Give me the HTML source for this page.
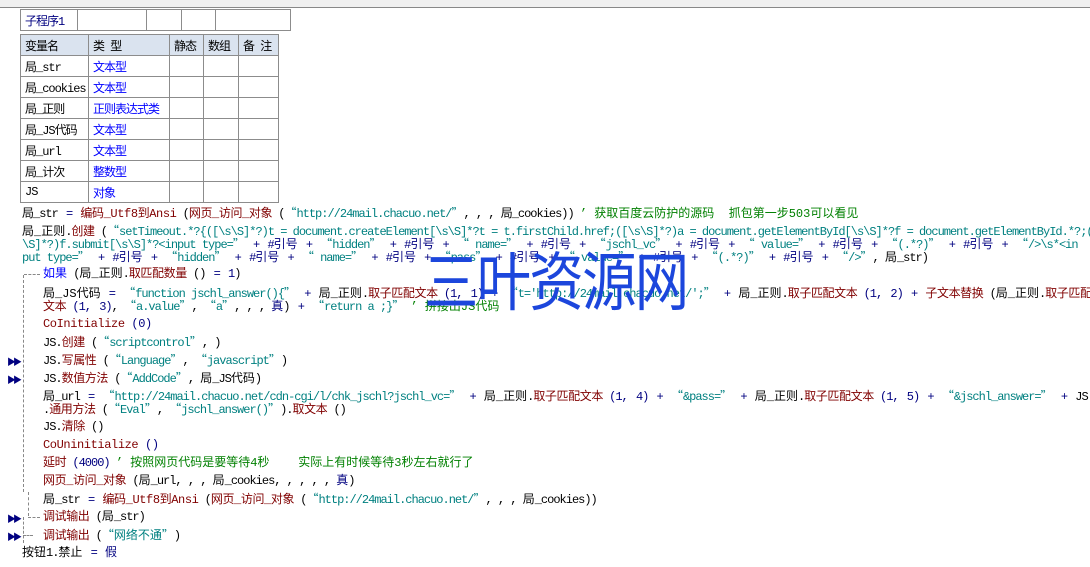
<!DOCTYPE html><html><head><meta charset="utf-8"><style>
body{margin:0;width:1090px;height:567px;background:#fff;position:relative;overflow:hidden;font-family:"Liberation Mono","Noto Sans CJK SC","WenQuanYi Zen Hei",monospace;font-size:12px;letter-spacing:-1px}
.l{position:absolute;white-space:pre;height:14px;line-height:14px;color:#000;word-spacing:0}
.r{color:#800000;letter-spacing:-0.4px}.t{color:#008080;word-spacing:0}.n{color:#000080;word-spacing:2px}.g{color:#008000;letter-spacing:0;word-spacing:0}.b{color:#0000ff}
.c{letter-spacing:0}
i{font-style:normal;font-family:"Noto Sans CJK SC",sans-serif;display:inline-block;width:12px;letter-spacing:0}
table{position:absolute;border-collapse:collapse;font-size:12px}
td{border:1px solid #8c8c8c;height:20px;padding:0 0 0 4px;white-space:nowrap}
.m{position:absolute;left:7px;color:#000080;font-size:9px;letter-spacing:-3px}
</style></head><body>
<div style="position:absolute;left:0;top:0;width:1090px;height:7px;background:#f0f0f0;border-bottom:1px solid #888"></div>
<table style="left:20px;top:9px"><tr><td style="width:52px;color:#000080">子程序1</td><td style="width:64px"></td><td style="width:30px"></td><td style="width:29px"></td><td style="width:70px"></td></tr></table>
<table style="left:20px;top:34px">
<tr style="background:#dae3ef"><td style="width:63px">变量名</td><td style="width:76px">类 型</td><td style="width:29px">静态</td><td style="width:30px">数组</td><td style="width:35px">备 注</td></tr>
<tr><td>局_str</td><td class="b">文本型</td><td></td><td></td><td></td></tr>
<tr><td>局_cookies</td><td class="b">文本型</td><td></td><td></td><td></td></tr>
<tr><td>局_正则</td><td class="b">正则表达式类</td><td></td><td></td><td></td></tr>
<tr><td>局_JS代码</td><td class="b">文本型</td><td></td><td></td><td></td></tr>
<tr><td>局_url</td><td class="b">文本型</td><td></td><td></td><td></td></tr>
<tr><td>局_计次</td><td class="b">整数型</td><td></td><td></td><td></td></tr>
<tr><td>JS</td><td class="b">对象</td><td></td><td></td><td></td></tr>
</table>
<div class="l" style="left:22px;top:206px">局_str<span class="n"> = </span><span class="r">编码_Utf8到Ansi</span> (<span class="r">网页_访问_对象</span> (<span class="t"><i>“</i>http://24mail.chacuo.net/<i>”</i></span>, , , 局_cookies)) <span class="g">’ 获取百度云防护的源码  抓包第一步503可以看见</span></div>
<div class="l" style="left:22px;top:224px"><span class="c">局_正则</span>.<span class="r">创建</span> (<span class="t"><i>“</i>setTimeout.*?{([\s\S]*?)t = document.createElement[\s\S]*?t = t.firstChild.href;([\s\S]*?)a = document.getElementById[\s\S]*?f = document.getElementById.*?;([\s</span></div>
<div class="l t" style="left:22px;top:237px">\S]*?)f.submit[\s\S]*?&lt;input type=<i>”</i><span class="n"> + #<span class="c">引号</span> + </span><i>“</i>hidden<i>”</i><span class="n"> + #<span class="c">引号</span> + </span><i>“</i> name=<i>”</i><span class="n"> + #<span class="c">引号</span> + </span><i>“</i>jschl_vc<i>”</i><span class="n"> + #<span class="c">引号</span> + </span><i>“</i> value=<i>”</i><span class="n"> + #<span class="c">引号</span> + </span><i>“</i>(.*?)<i>”</i><span class="n"> + #<span class="c">引号</span> + </span><i>“</i>/&gt;\s*&lt;in</div>
<div class="l t" style="left:22px;top:250px">put type=<i>”</i><span class="n"> + #<span class="c">引号</span> + </span><i>“</i>hidden<i>”</i><span class="n"> + #<span class="c">引号</span> + </span><i>“</i> name=<i>”</i><span class="n"> + #<span class="c">引号</span> + </span><i>“</i>pass<i>”</i><span class="n"> + #<span class="c">引号</span> + </span><i>“</i> value=<i>”</i><span class="n"> + #<span class="c">引号</span> + </span><i>“</i>(.*?)<i>”</i><span class="n"> + #<span class="c">引号</span> + </span><i>“</i>/&gt;<i>”</i><span style="color:#000">, <span class="c">局</span>_str)</span></div>
<div style="position:absolute;left:23px;top:275px;width:0;height:217px;border-left:1px dashed #888"></div>
<div style="position:absolute;left:24px;top:274px;width:16px;border-top:1px dashed #888"></div>
<div style="position:absolute;left:28px;top:492px;width:0;height:24px;border-left:1px dashed #888"></div>
<div style="position:absolute;left:28px;top:517px;width:12px;border-top:1px dashed #888"></div>
<div style="position:absolute;left:23px;top:517px;width:0;height:26px;border-left:1px dashed #888"></div>
<div style="position:absolute;left:23px;top:535px;width:10px;border-top:1px dashed #888"></div>
<div class="l" style="left:43px;top:267px"><span class="b c">如果</span> (<span class="c">局_正则</span>.<span class="r">取匹配数量</span> ()<span class="n"> = 1</span>)</div>
<div class="l" style="left:43px;top:286px"><span class="c">局_JS代码</span><span class="n"> = </span><span class="t"><i>“</i>function jschl_answer(){<i>”</i></span><span class="n"> + </span><span class="c">局_正则</span>.<span class="r">取子匹配文本</span> <span class="n">(1, 1) + </span><span class="t"><i>“</i>t='http://24mail.chacuo.net/';<i>”</i></span><span class="n"> + </span><span class="c">局_正则</span>.<span class="r">取子匹配文本</span> <span class="n">(1, 2) + </span><span class="r">子文本替换</span> (<span class="c">局_正则</span>.<span class="r">取子匹配</span></div>
<div class="l" style="left:43px;top:299px"><span class="r">文本</span> <span class="n">(1, 3)</span>, <span class="t"><i>“</i>a.value<i>”</i></span>, <span class="t"><i>“</i>a<i>”</i></span>, , , <span class="n c">真</span>)<span class="n"> + </span><span class="t"><i>“</i>return a ;}<i>”</i></span> <span class="g">’ 拼接出JS代码</span></div>
<div class="l r" style="left:43px;top:317px">CoInitialize <span class="n">(0)</span></div>
<div class="l" style="left:43px;top:335px">JS.<span class="r">创建</span> (<span class="t"><i>“</i>scriptcontrol<i>”</i></span>, )</div>
<div class="m" style="top:355px">▶▶</div>
<div class="l" style="left:43px;top:353px">JS.<span class="r">写属性</span> (<span class="t"><i>“</i>Language<i>”</i></span>, <span class="t"><i>“</i>javascript<i>”</i></span>)</div>
<div class="m" style="top:373px">▶▶</div>
<div class="l" style="left:43px;top:371px">JS.<span class="r">数值方法</span> (<span class="t"><i>“</i>AddCode<i>”</i></span>, <span class="c">局</span>_JS<span class="c">代码</span>)</div>
<div class="l" style="left:43px;top:389px"><span class="c">局</span>_url<span class="n"> = </span><span class="t"><i>“</i>http://24mail.chacuo.net/cdn-cgi/l/chk_jschl?jschl_vc=<i>”</i></span><span class="n"> + </span><span class="c">局_正则</span>.<span class="r">取子匹配文本</span> <span class="n">(1, 4) + </span><span class="t"><i>“</i>&amp;pass=<i>”</i></span><span class="n"> + </span><span class="c">局_正则</span>.<span class="r">取子匹配文本</span> <span class="n">(1, 5) + </span><span class="t"><i>“</i>&amp;jschl_answer=<i>”</i></span><span class="n"> + </span>JS</div>
<div class="l" style="left:43px;top:402px">.<span class="r">通用方法</span> (<span class="t"><i>“</i>Eval<i>”</i></span>, <span class="t"><i>“</i>jschl_answer()<i>”</i></span>).<span class="r">取文本</span> ()</div>
<div class="l" style="left:43px;top:420px">JS.<span class="r">清除</span> ()</div>
<div class="l r" style="left:43px;top:438px">CoUninitialize <span class="n">()</span></div>
<div class="l" style="left:43px;top:456px"><span class="r">延时</span> <span class="n">(4000)</span> <span class="g">’ 按照网页代码是要等待4秒    实际上有时候等待3秒左右就行了</span></div>
<div class="l" style="left:43px;top:474px"><span class="r">网页_访问_对象</span> (<span class="c">局</span>_url, , , <span class="c">局</span>_cookies, , , , , <span class="n c">真</span>)</div>
<div class="l" style="left:43px;top:492px"><span class="c">局</span>_str<span class="n"> = </span><span class="r">编码_Utf8到Ansi</span> (<span class="r">网页_访问_对象</span> (<span class="t"><i>“</i>http://24mail.chacuo.net/<i>”</i></span>, , , <span class="c">局</span>_cookies))</div>
<div class="m" style="top:512px">▶▶</div>
<div class="l" style="left:43px;top:510px"><span class="r">调试输出</span> (<span class="c">局</span>_str)</div>
<div class="m" style="top:530px">▶▶</div>
<div class="l" style="left:43px;top:528px"><span class="r">调试输出</span> (<span class="t c"><i>“</i>网络不通<i>”</i></span>)</div>
<div class="l" style="left:22px;top:546px"><span class="c">按钮</span>1.<span class="c">禁止</span><span class="n"> = </span><span class="n c">假</span></div>
<div style="position:absolute;left:424px;top:238px;font-family:'Noto Sans CJK SC',sans-serif;font-size:64px;line-height:80px;letter-spacing:-2px;color:#1c46dc;white-space:nowrap;transform:scaleX(0.85);transform-origin:0 0">三叶资源网</div>
</body></html>
